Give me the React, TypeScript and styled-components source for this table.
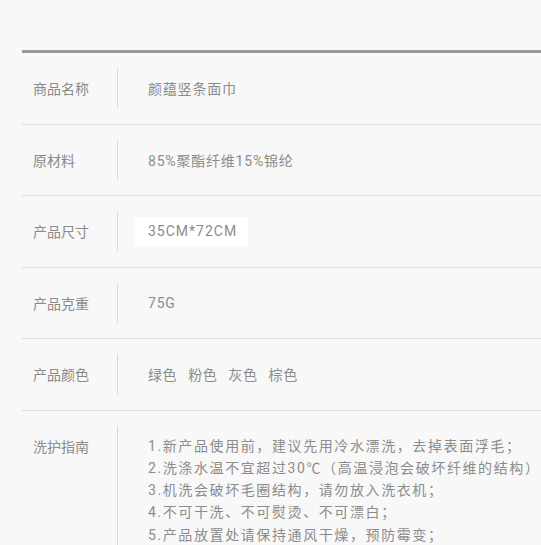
import React from 'react';
import styled, { createGlobalStyle } from 'styled-components';

const GlobalStyle = createGlobalStyle`
  html, body {
    margin: 0;
    padding: 0;
    background: #f8f8f8;
    overflow: hidden;
  }
  body {
    font-family: Roboto, "Noto Sans CJK SC", sans-serif;
  }
`;

const Page = styled.div`
  width: 541px;
  height: 545px;
  padding-top: 50px;
  padding-left: 22px;
  box-sizing: border-box;
  background: #f8f8f8;
`;

const Table = styled.div`
  border-top: 3px solid #9a999e;
`;

const Row = styled.div<{ $tall?: boolean }>`
  display: grid;
  grid-template-columns: 95px 1px 1fr;
  align-items: ${(p) => (p.$tall ? 'start' : 'center')};
  height: ${(p) => (p.$tall ? 'auto' : '70.5px')};
  padding-top: ${(p) => (p.$tall ? '15px' : '0')};
  border-bottom: ${(p) => (p.$tall ? 'none' : '1px solid #dedede')};
`;

const Label = styled.div<{ $tall?: boolean }>`
  padding-left: 11px;
  padding-top: ${(p) => (p.$tall ? '10px' : '0')};
  font-size: 14px;
  color: #8a8a8a;
  font-family: "Noto Sans CJK SC", sans-serif;
  white-space: nowrap;
`;

const Divider = styled.div<{ $tall?: boolean }>`
  width: 1px;
  height: ${(p) => (p.$tall ? '140px' : '40px')};
  background: #d9d9d9;
`;

const Value = styled.div`
  padding-left: 30px;
  font-size: 14px;
  color: #8c8c8c;
  letter-spacing: 0.8px;
  white-space: nowrap;
`;

const Highlight = styled.span`
  display: inline-block;
  margin-left: -13px;
  padding: 0 11px 0 13px;
  height: 29px;
  line-height: 29px;
  background: #ffffff;
  letter-spacing: 1px;
`;

const Colors = styled.div`
  display: flex;
  gap: 11px;
  letter-spacing: 0.6px;
`;

const CareList = styled.div`
  padding-left: 30px;
  padding-top: 9px;
  font-size: 14px;
  line-height: 22.3px;
  letter-spacing: 1.6px;
  color: #8c8c8c;
  white-space: nowrap;
`;

const rows = [
  { label: '商品名称', value: '颜蕴竖条面巾' },
  { label: '原材料', value: '85%聚酯纤维15%锦纶' },
];

const care = [
  '1.新产品使用前，建议先用冷水漂洗，去掉表面浮毛；',
  '2.洗涤水温不宜超过30℃（高温浸泡会破坏纤维的结构）',
  '3.机洗会破坏毛圈结构，请勿放入洗衣机；',
  '4.不可干洗、不可熨烫、不可漂白；',
  '5.产品放置处请保持通风干燥，预防霉变；',
];

export default function App() {
  return (
    <>
      <GlobalStyle />
      <Page>
        <Table>
          {rows.map((r) => (
            <Row key={r.label}>
              <Label>{r.label}</Label>
              <Divider />
              <Value>{r.value}</Value>
            </Row>
          ))}
          <Row>
            <Label>产品尺寸</Label>
            <Divider />
            <Value>
              <Highlight>35CM*72CM</Highlight>
            </Value>
          </Row>
          <Row>
            <Label>产品克重</Label>
            <Divider />
            <Value>75G</Value>
          </Row>
          <Row>
            <Label>产品颜色</Label>
            <Divider />
            <Value>
              <Colors>
                <span>绿色</span>
                <span>粉色</span>
                <span>灰色</span>
                <span>棕色</span>
              </Colors>
            </Value>
          </Row>
          <Row $tall>
            <Label $tall>洗护指南</Label>
            <Divider $tall />
            <CareList>
              {care.map((line) => (
                <div key={line}>{line}</div>
              ))}
            </CareList>
          </Row>
        </Table>
      </Page>
    </>
  );
}
